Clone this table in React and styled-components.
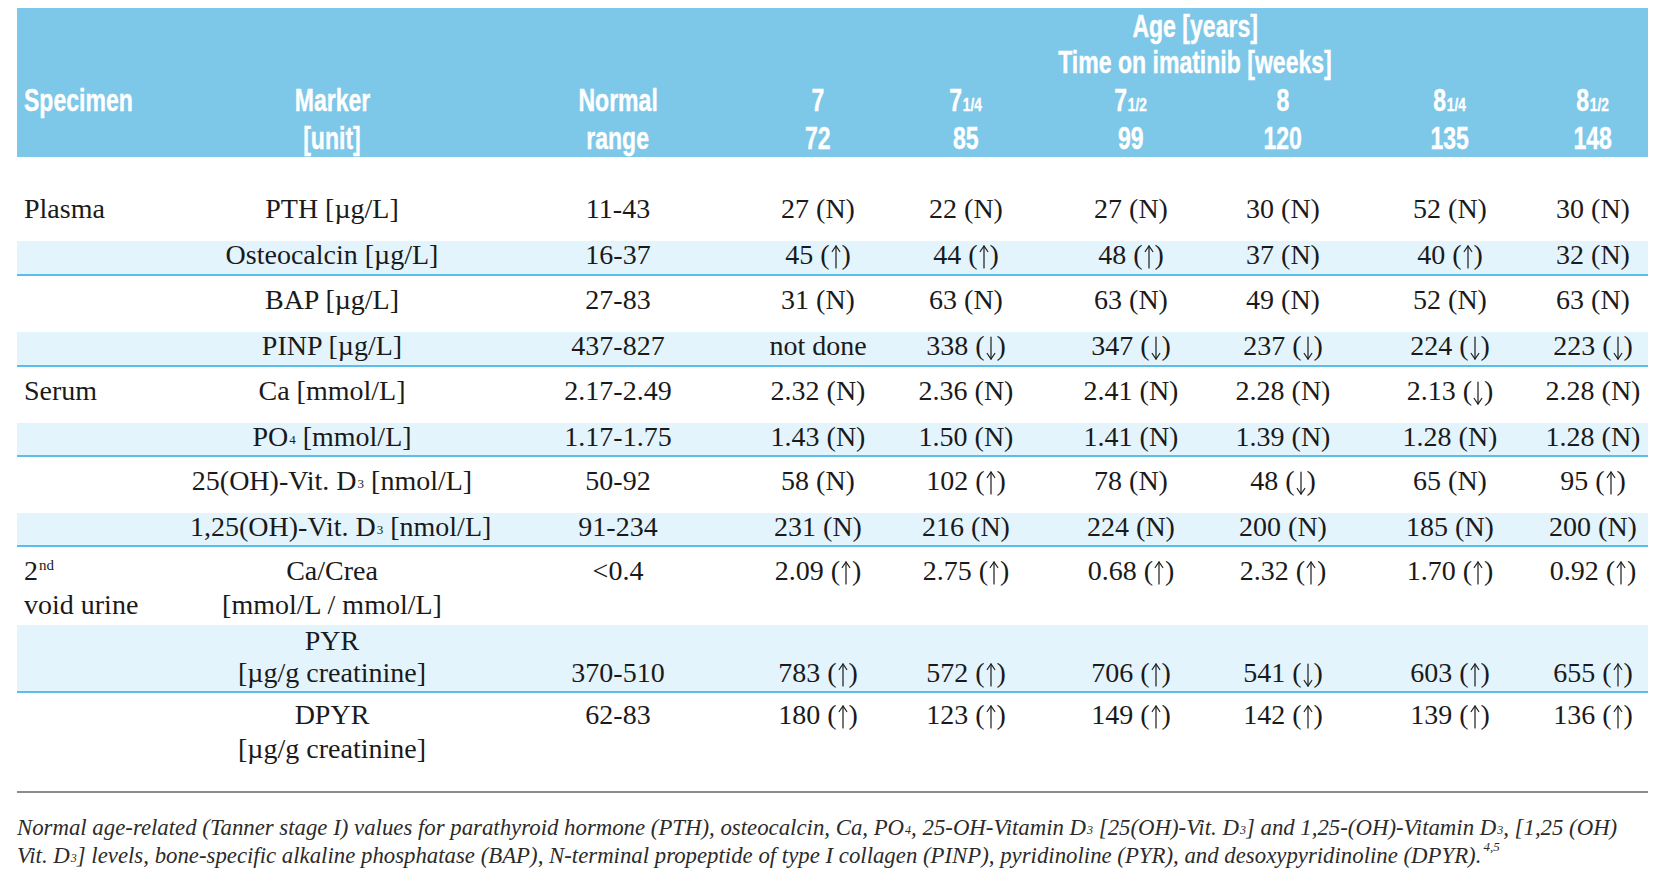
import React from "react";
import styled, { createGlobalStyle } from "styled-components";

const GlobalStyle = createGlobalStyle`
  html, body {
    margin: 0;
    padding: 0;
    background: #ffffff;
  }
`;

// column widths (px) - specimen, marker, range, then 6 time points
const widths = [173, 284, 288, 112, 184, 146, 158, 176, 110];

const ages = [
  { whole: "7", frac: "", weeks: "72" },
  { whole: "7", frac: "1/4", weeks: "85" },
  { whole: "7", frac: "1/2", weeks: "99" },
  { whole: "8", frac: "", weeks: "120" },
  { whole: "8", frac: "1/4", weeks: "135" },
  { whole: "8", frac: "1/2", weeks: "148" },
];

const Sub = styled.span`
  font-size: 13px;
  line-height: 0;
  vertical-align: 0.15em;
  margin-left: 1px;
`;

const SupText = styled.sup`
  font-size: 15px;
  vertical-align: 0.7em;
  line-height: 0;
  margin-left: 1px;
`;

const rows = [
  {
    spec: ["Plasma"],
    marker: ["PTH [µg/L]"],
    range: "11-43",
    vals: ["27 (N)", "22 (N)", "27 (N)", "30 (N)", "52 (N)", "30 (N)"],
  },
  {
    marker: ["Osteocalcin [µg/L]"],
    range: "16-37",
    vals: ["45 (↑)", "44 (↑)", "48 (↑)", "37 (N)", "40 (↑)", "32 (N)"],
    band: true,
  },
  {
    marker: ["BAP [µg/L]"],
    range: "27-83",
    vals: ["31 (N)", "63 (N)", "63 (N)", "49 (N)", "52 (N)", "63 (N)"],
  },
  {
    marker: ["PINP [µg/L]"],
    range: "437-827",
    vals: ["not done", "338 (↓)", "347 (↓)", "237 (↓)", "224 (↓)", "223 (↓)"],
    band: true,
  },
  {
    spec: ["Serum"],
    marker: ["Ca [mmol/L]"],
    range: "2.17-2.49",
    vals: ["2.32 (N)", "2.36 (N)", "2.41 (N)", "2.28 (N)", "2.13 (↓)", "2.28 (N)"],
  },
  {
    marker: [
      <>
        PO<Sub>4</Sub> [mmol/L]
      </>,
    ],
    range: "1.17-1.75",
    vals: ["1.43 (N)", "1.50 (N)", "1.41 (N)", "1.39 (N)", "1.28 (N)", "1.28 (N)"],
    band: true,
  },
  {
    marker: [
      <>
        25(OH)-Vit. D<Sub>3</Sub> [nmol/L]
      </>,
    ],
    range: "50-92",
    vals: ["58 (N)", "102 (↑)", "78 (N)", "48 (↓)", "65 (N)", "95 (↑)"],
  },
  {
    marker: [
      <>
        1,25(OH)-Vit. D<Sub>3</Sub> [nmol/L]
      </>,
    ],
    range: "91-234",
    vals: ["231 (N)", "216 (N)", "224 (N)", "200 (N)", "185 (N)", "200 (N)"],
    band: true,
  },
  {
    spec: [
      <>
        2<SupText>nd</SupText>
      </>,
      "void urine",
    ],
    marker: ["Ca/Crea", "[mmol/L / mmol/L]"],
    range: "<0.4",
    vals: ["2.09 (↑)", "2.75 (↑)", "0.68 (↑)", "2.32 (↑)", "1.70 (↑)", "0.92 (↑)"],
    pb: 3,
  },
  {
    marker: ["PYR", "[µg/g creatinine]"],
    range: "370-510",
    vals: ["783 (↑)", "572 (↑)", "706 (↑)", "541 (↓)", "603 (↑)", "655 (↑)"],
    band: true,
    bottom: true,
    lh: 32,
    pb: 2,
  },
  {
    marker: ["DPYR", "[µg/g creatinine]"],
    range: "62-83",
    vals: ["180 (↑)", "123 (↑)", "149 (↑)", "142 (↑)", "139 (↑)", "136 (↑)"],
    pt: 5,
    pb: 2,
  },
];

// thin arrow drawn inside the parentheses
const Arrow = ({ down }) => (
  <ArrowSvg viewBox="0 0 10 24" width="10" height="24">
    <g
      fill="none"
      stroke="#1a1a1a"
      strokeWidth="1.2"
      strokeLinecap="round"
      transform={down ? "rotate(180 5 12)" : undefined}
    >
      <line x1="5" y1="1" x2="5" y2="23" />
      <polyline points="1.2,6.5 5,1 8.8,6.5" />
    </g>
  </ArrowSvg>
);

const renderVal = (v) => {
  const m = v.match(/^(.*)\((↑|↓)\)$/);
  if (!m) return v;
  return (
    <>
      {m[1]}(
      <Arrow down={m[2] === "↓"} />)
    </>
  );
};

const App = () => {
  return (
    <>
      <GlobalStyle />
      <Page>
        <Table>
          <colgroup>
            {widths.map((w, i) => (
              <Col key={i} $w={w} />
            ))}
          </colgroup>
          <thead>
            <HeadRow $h={35}>
              <HeadCell colSpan={3} />
              <HeadCell colSpan={6} $center $shift>
                <HeadText>Age [years]</HeadText>
              </HeadCell>
            </HeadRow>
            <HeadRow>
              <HeadCell colSpan={3} />
              <HeadCell colSpan={6} $center $shift>
                <HeadText>Time on imatinib [weeks]</HeadText>
              </HeadCell>
            </HeadRow>
            <HeadRow>
              <HeadCell $left>
                <HeadText $left>Specimen</HeadText>
              </HeadCell>
              <HeadCell $center>
                <HeadText>Marker</HeadText>
              </HeadCell>
              <HeadCell $center>
                <HeadText>Normal</HeadText>
              </HeadCell>
              {ages.map((a, i) => (
                <HeadCell key={i} $center>
                  <HeadText>
                    {a.whole}
                    {a.frac && <Frac>{a.frac}</Frac>}
                  </HeadText>
                </HeadCell>
              ))}
            </HeadRow>
            <HeadRow>
              <HeadCell />
              <HeadCell $center>
                <HeadText>[unit]</HeadText>
              </HeadCell>
              <HeadCell $center>
                <HeadText>range</HeadText>
              </HeadCell>
              {ages.map((a, i) => (
                <HeadCell key={i} $center>
                  <HeadText>{a.weeks}</HeadText>
                </HeadCell>
              ))}
            </HeadRow>
          </thead>
          <tbody>
            <tr>
              <Spacer colSpan={9} />
            </tr>
            {rows.map((row, index) => {
              const valign = row.bottom ? "bottom" : "top";
              const common = {
                $band: row.band,
                $pb: row.pb,
                $pt: row.pt,
                $lh: row.lh,
              };
              return (
                <Row key={index} $band={row.band}>
                  <Cell {...common} $left>
                    {(row.spec || []).map((s, i) => (
                      <Line key={i}>{s}</Line>
                    ))}
                  </Cell>
                  <Cell {...common}>
                    {row.marker.map((m, i) => (
                      <Line key={i}>{m}</Line>
                    ))}
                  </Cell>
                  <Cell {...common} $valign={valign}>
                    {row.range}
                  </Cell>
                  {row.vals.map((v, i) => (
                    <Cell key={i} {...common} $valign={valign}>
                      {renderVal(v)}
                    </Cell>
                  ))}
                </Row>
              );
            })}
          </tbody>
        </Table>
        <Rule />
        <Note>
          Normal age-related (Tanner stage I) values for parathyroid hormone
          (PTH), osteocalcin, Ca, PO<NoteSub>4</NoteSub>, 25-OH-Vitamin D
          <NoteSub>3</NoteSub> [25(OH)-Vit. D<NoteSub>3</NoteSub>] and
          1,25-(OH)-Vitamin D<NoteSub>3</NoteSub>, [1,25 (OH)
          <br />
          Vit. D<NoteSub>3</NoteSub>] levels, bone-specific alkaline phosphatase
          (BAP), N-terminal propeptide of type I collagen (PINP), pyridinoline
          (PYR), and desoxypyridinoline (DPYR).<NoteSup>4,5</NoteSup>
        </Note>
      </Page>
    </>
  );
};

export default App;

const Page = styled.div`
  padding: 8px 26px 0 17px;
  width: 1631px;
`;

const Table = styled.table`
  width: 1631px;
  border-collapse: collapse;
  table-layout: fixed;
  font-family: "Liberation Serif", "Times New Roman", serif;
  color: #1a1a1a;
`;

const Col = styled.col`
  width: ${(p) => p.$w}px;
`;

const HeadRow = styled.tr`
  background-color: #7dc7e8;
  height: ${(p) => p.$h || 38}px;
`;

const HeadCell = styled.th`
  padding: 0 ${(p) => (p.$shift ? "20px" : "0")} 0 ${(p) => (p.$left ? "7px" : "0")};
  line-height: 34px;
  font-family: "Liberation Sans", Arial, sans-serif;
  font-weight: bold;
  font-size: 32px;
  color: #ffffff;
  text-align: ${(p) => (p.$center ? "center" : "left")};
  vertical-align: middle;
  white-space: nowrap;
`;

// the header face is a tall condensed grotesque: squeeze a bold sans
const HeadText = styled.span`
  display: inline-block;
  line-height: 34px;
  transform: scaleX(0.72);
  transform-origin: ${(p) => (p.$left ? "left center" : "center center")};
  -webkit-text-stroke: 0.4px #ffffff;
`;

const Frac = styled.span`
  font-size: 19px;
  line-height: 0;
  margin-left: 1px;
`;

const Spacer = styled.td`
  height: 28px;
  padding: 0;
`;

const Row = styled.tr`
  background-color: ${(p) => (p.$band ? "#e4f4fc" : "transparent")};
  border-bottom: ${(p) => (p.$band ? "2px solid #58bfe8" : "none")};
`;

const Cell = styled.td`
  padding: ${(p) =>
    p.$band
      ? `0 0 ${p.$pb ?? 5}px ${p.$left ? "7px" : "0"}`
      : `${p.$pt ?? 7}px 0 ${p.$pb ?? 15}px ${p.$left ? "7px" : "0"}`};
  line-height: ${(p) => (p.$lh ? p.$lh : p.$band ? 27 : 34)}px;
  font-size: 28px;
  text-align: ${(p) => (p.$left ? "left" : "center")};
  vertical-align: ${(p) => p.$valign || "top"};
  white-space: nowrap;
`;

const Line = styled.div``;

const ArrowSvg = styled.svg`
  vertical-align: -5px;
  margin: 0 1px;
`;

const Rule = styled.div`
  height: 2px;
  background-color: #8c8c8c;
  margin-top: 23px;
`;

const Note = styled.p`
  margin: 21px 0 0 0;
  font-family: "Liberation Serif", "Times New Roman", serif;
  font-style: italic;
  font-size: 22.8px;
  line-height: 28px;
  color: #2b2b2b;
  white-space: nowrap;
`;

const NoteSub = styled.span`
  font-size: 12px;
  line-height: 0;
  vertical-align: 0.1em;
  margin-left: 1px;
`;

const NoteSup = styled.sup`
  font-size: 13px;
  line-height: 0;
  vertical-align: 0.9em;
  margin-left: 2px;
`;
